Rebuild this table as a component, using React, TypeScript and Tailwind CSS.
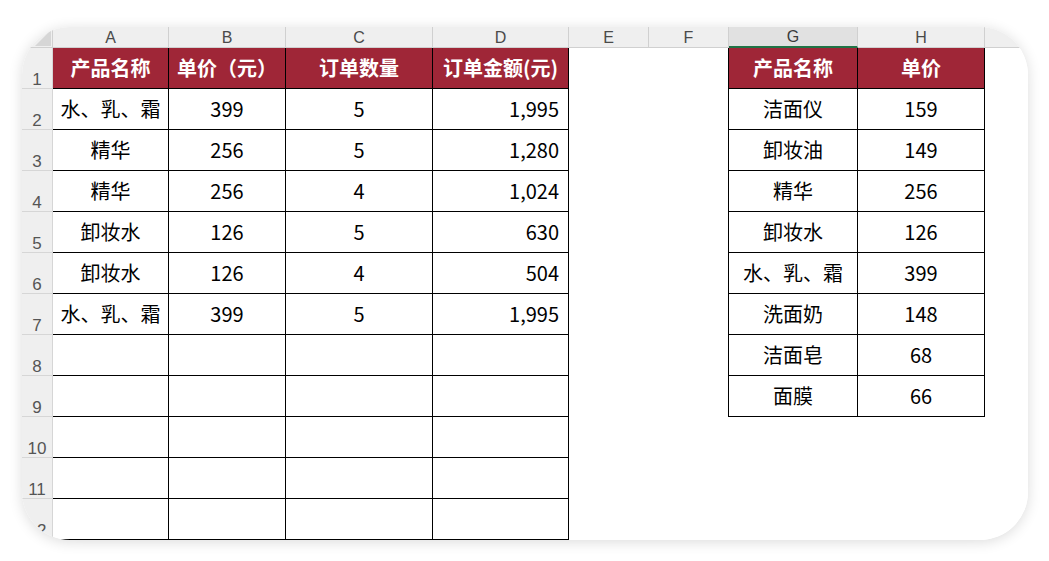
import React from "react";

const FONT = { fontFamily: '"Noto Sans CJK SC", "Noto Sans", sans-serif' };

const left: string[][] = [
  ["产品名称", "单价（元）", "订单数量", "订单金额(元)"],
  ["水、乳、霜", "399", "5", "1,995"],
  ["精华", "256", "5", "1,280"],
  ["精华", "256", "4", "1,024"],
  ["卸妆水", "126", "5", "630"],
  ["卸妆水", "126", "4", "504"],
  ["水、乳、霜", "399", "5", "1,995"],
];

const right: string[][] = [
  ["产品名称", "单价"],
  ["洁面仪", "159"],
  ["卸妆油", "149"],
  ["精华", "256"],
  ["卸妆水", "126"],
  ["水、乳、霜", "399"],
  ["洗面奶", "148"],
  ["洁面皂", "68"],
  ["面膜", "66"],
];

const letters = ["A", "B", "C", "D", "E", "F", "G", "H", ""];

export default function App() {
  const cells: React.ReactNode[] = [];

  cells.push(
    <div key="corner" className="relative bg-[#efefef] border-r border-b border-[#d0d0d0]">
      <svg className="absolute right-[1px] bottom-[1px]" width="16" height="16" viewBox="0 0 16 16">
        <polygon points="16,0 16,16 0,16" fill="#d6d6d6" />
      </svg>
    </div>
  );
  letters.forEach((l, i) => {
    const sel = l === "G";
    cells.push(
      <div
        key={"h" + i}
        className={
          sel
            ? "flex items-center justify-center bg-[#e1e1e1] border-r border-[#d0d0d0] border-b-2 border-b-[#217346] text-[16px] leading-[16px] pt-[1px] text-[#3a3a3a]"
            : "flex items-center justify-center bg-[#efefef] border-r border-b border-[#d0d0d0] text-[16px] leading-[16px] pt-[1px] text-[#4a4a4a]"
        }
        style={{ fontFamily: '"Liberation Sans", sans-serif' }}
      >
        {l}
      </div>
    );
  });

  for (let r = 1; r <= 12; r++) {
    cells.push(
      <div
        key={"rn" + r}
        className="flex items-end justify-center bg-[#efefef] border-r border-b border-[#d6d6d6] text-[17px] leading-[17px] text-[#555]"
        style={{ fontFamily: '"Liberation Sans", sans-serif' }}
      >
        {r}
      </div>
    );
    for (let c = 0; c < 4; c++) {
      const row = left[r - 1];
      const txt = row ? row[c] : "";
      const header = r === 1;
      const alignRight = !header && c === 3;
      cells.push(
        <div
          key={"l" + r + "-" + c}
          className={
            (header
              ? "bg-[#9f2637] text-white font-bold "
              : "bg-white text-black ") +
            "flex items-center border-r border-b border-black text-[20px] leading-none whitespace-nowrap " +
            (alignRight ? "justify-end pr-[9px]" : "justify-center")
          }
          style={FONT}
        >
          {txt}
        </div>
      );
    }
    cells.push(<div key={"e" + r} className="bg-white" />);
    cells.push(
      <div key={"f" + r} className={r <= 9 ? "bg-white border-r border-black" : "bg-white"} />
    );
    for (let c = 0; c < 2; c++) {
      if (r <= 9) {
        const header = r === 1;
        cells.push(
          <div
            key={"g" + r + "-" + c}
            className={
              (header ? "bg-[#9f2637] text-white font-bold " : "bg-white text-black ") +
              "flex items-center justify-center border-r border-b border-black text-[20px] leading-none whitespace-nowrap"
            }
            style={FONT}
          >
            {right[r - 1][c]}
          </div>
        );
      } else {
        cells.push(<div key={"g" + r + "-" + c} className="bg-white" />);
      }
    }
    cells.push(<div key={"i" + r} className="bg-white" />);
  }

  return (
    <div className="w-[1049px] h-[561px] bg-white pt-[27px] pl-[22px]">
      <div className="w-[1006px] h-[513px] rounded-[48px] overflow-hidden bg-white shadow-[0_2px_14px_rgba(0,0,0,0.14)] grid grid-cols-[31px_116px_117px_147px_136px_80px_80px_129px_127px_1fr] grid-rows-[21px_repeat(12,41px)]">
        {cells}
      </div>
    </div>
  );
}
